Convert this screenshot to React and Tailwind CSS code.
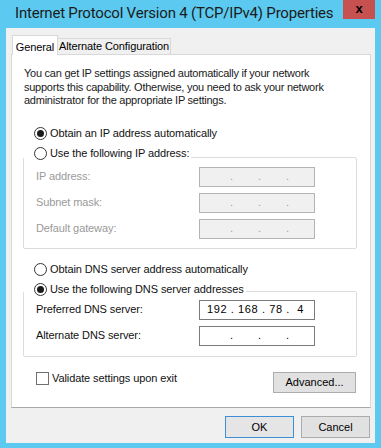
export default function App() {
  const ui = { fontFamily: '"Liberation Sans", Arial, sans-serif' };

  const Radio = ({ checked }) => (
    <span className="flex h-[13px] w-[13px] shrink-0 items-center justify-center rounded-full border border-[#333] bg-white">
      {checked && <span className="h-[7px] w-[7px] rounded-full bg-[#1a1a1a]" />}
    </span>
  );

  const IpBox = ({ value, disabled }) => (
    <div
      className={`flex h-[20px] w-[116px] items-center border text-[11px] ${
        disabled ? "border-[#b4b4b4] bg-[#f0f0f0] text-[#a0a0a0]" : "border-[#7a7a7a] bg-white text-black"
      }`}
    >
      {value ? (
        <span className="w-full whitespace-pre pr-[3px] text-center tracking-[0.6px]">{value}</span>
      ) : (
        <div className="flex gap-[25px] pl-[30px]">
          <span className="w-[3px] text-center">.</span>
          <span className="w-[3px] text-center">.</span>
          <span className="w-[3px] text-center">.</span>
        </div>
      )}
    </div>
  );

  const Row = ({ label, value, disabled }) => (
    <div className="flex h-[26px] items-center">
      <span className={`w-[163px] text-[11px] tracking-[-0.1px] ${disabled ? "text-[#9a9a9a]" : "text-[#111]"}`}>{label}</span>
      <IpBox value={value} disabled={disabled} />
    </div>
  );

  return (
    <div className="flex h-[448px] w-[381px] flex-col bg-[#5ccaf0]" style={ui}>
      {/* title bar */}
      <div className="flex h-[28px] items-start">
        <span
          className="whitespace-nowrap pl-[15px] pt-[3px] text-[15px] leading-[21px] tracking-[-0.2px] text-[#1b1b1b]"
          style={{ fontFamily: 'Roboto, "Open Sans", sans-serif' }}
        >
          Internet Protocol Version 4 (TCP/IPv4) Properties
        </span>
        <div className="ml-auto mr-[6px] flex h-[19px] w-[32px] shrink-0 items-center justify-center bg-[#c75050] pb-[2px] text-[13px] font-bold leading-none text-black">
          x
        </div>
      </div>

      {/* client area */}
      <div className="mx-[6px] flex h-[415px] flex-col bg-[#f0f0f0] px-[5px] pt-[7px]">
        {/* tabs */}
        <div className="flex items-end pl-[1px]">
          <div className="relative z-10 -mb-px flex h-[20px] w-[46px] items-start justify-center whitespace-nowrap border border-b-0 border-[#d9d9d9] bg-white pt-[3px] text-[11px] tracking-[-0.1px] text-black">
            General
          </div>
          <div className="flex h-[16px] w-[113px] items-center justify-center whitespace-nowrap border border-b-0 border-l-0 border-[#d9d9d9] bg-[#f0f0f0] text-[11px] tracking-[-0.1px] text-black">
            Alternate Configuration
          </div>
        </div>

        {/* panel */}
        <div className="flex h-[354px] w-[360px] flex-col border border-[#d9d9d9] border-b-[#a8a8a8] bg-white pl-[12px] pr-[13px] pt-[12px]">
          <p className="w-[300px] text-[11px] leading-[13.5px] tracking-[-0.25px] text-[#1a1a1a]">
            You can get IP settings assigned automatically if your network supports this capability. Otherwise, you need to ask your network administrator for the appropriate IP settings.
          </p>

          <div className="mt-[18px] flex h-[16px] items-center gap-[3px] pl-[10px] text-[11px] tracking-[-0.1px] text-[#111]">
            <Radio checked />
            <span>Obtain an IP address automatically</span>
          </div>

          <div className="relative z-10 mt-[4px] flex h-[16px] w-fit items-center gap-[3px] bg-white pl-[10px] pr-[2px] text-[11px] tracking-[-0.1px] text-[#111]">
            <Radio />
            <span>Use the following IP address:</span>
          </div>
          <div className="-ml-[1px] -mt-[5px] flex h-[92px] w-[334px] flex-col rounded-[2px] border border-[#dcdcdc] pl-[12px] pt-[6px]">
            <Row label="IP address:" disabled />
            <Row label="Subnet mask:" disabled />
            <Row label="Default gateway:" disabled />
          </div>

          <div className="mt-[13px] flex h-[16px] items-center gap-[3px] pl-[10px] text-[11px] tracking-[-0.1px] text-[#111]">
            <Radio />
            <span>Obtain DNS server address automatically</span>
          </div>

          <div className="relative z-10 mt-[4px] flex h-[16px] w-fit items-center gap-[3px] bg-white pl-[10px] pr-[2px] text-[11px] tracking-[-0.1px] text-[#111]">
            <Radio checked />
            <span>Use the following DNS server addresses</span>
          </div>
          <div className="-ml-[1px] -mt-[7px] flex h-[66px] w-[334px] flex-col rounded-[2px] border border-[#dcdcdc] pl-[12px] pt-[5px]">
            <Row label="Preferred DNS server:" value="192 . 168 . 78 .  4" />
            <Row label="Alternate DNS server:" />
          </div>

          <div className="mt-[15px] flex items-start justify-between pl-[12px]">
            <div className="flex h-[13px] items-center gap-[3px] text-[11px] tracking-[-0.1px] text-[#111]">
              <span className="h-[13px] w-[13px] shrink-0 border border-[#707070] bg-white" />
              <span>Validate settings upon exit</span>
            </div>
            <button className="mr-px h-[21px] w-[83px] border border-[#acacac] bg-[#e1e1e1] text-[11px] text-black">
              Advanced...
            </button>
          </div>
        </div>

        {/* footer */}
        <div className="flex justify-end gap-[7px] pt-[8px]">
          <button className="h-[22px] w-[69px] border border-[#3c8fd6] bg-[#e5e5e5] text-[11px] text-black">
            OK
          </button>
          <button className="h-[22px] w-[69px] border border-[#acacac] bg-[#e1e1e1] text-[11px] text-black">
            Cancel
          </button>
        </div>
      </div>
    </div>
  );
}
